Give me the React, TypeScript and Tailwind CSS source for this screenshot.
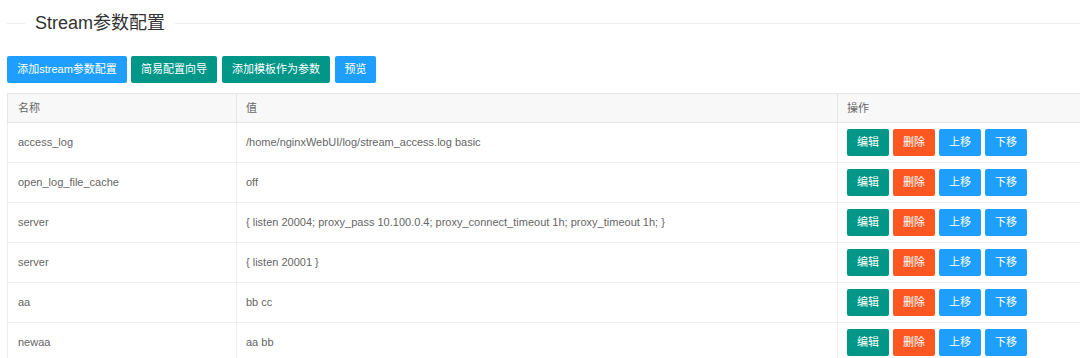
const rows = [
  { name: "access_log", value: "/home/nginxWebUI/log/stream_access.log basic" },
  { name: "open_log_file_cache", value: "off" },
  { name: "server", value: "{ listen 20004; proxy_pass 10.100.0.4; proxy_connect_timeout 1h; proxy_timeout 1h; }" },
  { name: "server", value: "{ listen 20001 }" },
  { name: "aa", value: "bb cc" },
  { name: "newaa", value: "aa bb" },
]

export default function App() {
  return (
    <div
      className="h-[358px] w-[1080px] overflow-hidden bg-white pl-[7px]"
      style={{ fontFamily: '"Liberation Sans", Arial, "Noto Sans CJK SC", sans-serif' }}
    >
      {/* 标题 */}
      <div className="flex items-center pt-[10px]">
        <div className="h-px w-[18px] bg-[#eeeeee]" />
        <h2 className="px-[10px] text-[18px] leading-[26px] text-[#333]">Stream参数配置</h2>
        <div className="h-px flex-1 bg-[#eeeeee]" />
      </div>

      {/* 按钮 */}
      <div className="mt-[20px] flex gap-[4px] text-[11px] text-white">
        <button className="h-[27px] w-[120px] rounded-[2px] bg-[#1E9FFF]">添加stream参数配置</button>
        <button className="h-[27px] w-[86px] rounded-[2px] bg-[#009688]">简易配置向导</button>
        <button className="ml-[1px] h-[27px] w-[108px] rounded-[2px] bg-[#009688]">添加模板作为参数</button>
        <button className="ml-[1px] h-[27px] w-[41px] rounded-[2px] bg-[#1E9FFF]">预览</button>
      </div>

      {/* 表格 */}
      <table className="mt-[10px] w-[1080px] table-fixed border-collapse text-[11px] text-[#666]">
        <colgroup>
          <col className="w-[229px]" />
          <col className="w-[601px]" />
          <col />
        </colgroup>
        <thead>
          <tr className="h-[29px] bg-[#f8f8f8]">
            <th className="border border-[#e6e6e6] px-[10px] text-left font-normal">名称</th>
            <th className="border border-[#e6e6e6] px-[9px] text-left font-normal">值</th>
            <th className="border border-[#e6e6e6] px-[9px] text-left font-normal">操作</th>
          </tr>
        </thead>
        <tbody>
          {rows.map((row, i) => (
            <tr key={i} className="h-[40px]">
              <td className="border border-[#eeeeee] px-[10px]">{row.name}</td>
              <td className="border border-[#eeeeee] px-[9px]">{row.value}</td>
              <td className="border border-[#eeeeee] px-[9px]">
                <div className="flex gap-[4px] text-white">
                  <button className="h-[27px] w-[42px] rounded-[2px] bg-[#009688]">编辑</button>
                  <button className="h-[27px] w-[42px] rounded-[2px] bg-[#FF5722]">删除</button>
                  <button className="h-[27px] w-[42px] rounded-[2px] bg-[#1E9FFF]">上移</button>
                  <button className="h-[27px] w-[42px] rounded-[2px] bg-[#1E9FFF]">下移</button>
                </div>
              </td>
            </tr>
          ))}
        </tbody>
      </table>
    </div>
  )
}
